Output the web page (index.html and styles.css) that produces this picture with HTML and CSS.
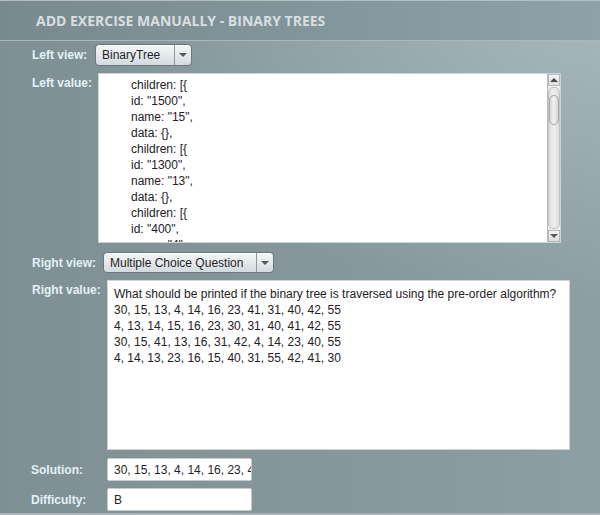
FILE: index.html
```html
<!DOCTYPE html>
<html>
<head>
<meta charset="utf-8">
<link rel="stylesheet" href="styles.css">
</head>
<body>
<div class="window">
  <div class="title">ADD EXERCISE MANUALLY - BINARY TREES</div>
  <div class="form">
    <div class="row row-view1">
      <div class="label lbl-view1">Left view:</div>
      <div class="combo combo-left">
        <span class="combo-text">BinaryTree</span>
        <span class="combo-arrow"><span class="tri"></span></span>
      </div>
    </div>
    <div class="row row-value1">
      <div class="label lbl-value1 lbl-top">Left value:</div>
      <div class="textbox textbox-left">
        <div class="code">
          <div>children: [{</div>
          <div>id: "1500",</div>
          <div>name: "15",</div>
          <div>data: {},</div>
          <div>children: [{</div>
          <div>id: "1300",</div>
          <div>name: "13",</div>
          <div>data: {},</div>
          <div>children: [{</div>
          <div>id: "400",</div>
          <div>name: "4",</div>
        </div>
        <div class="vscroll">
          <div class="sb-btn"><span class="tri-up"></span></div>
          <div class="sb-track">
            <div class="sb-thumb"></div>
          </div>
          <div class="sb-btn"><span class="tri"></span></div>
        </div>
      </div>
    </div>
    <div class="row row-view2">
      <div class="label lbl-view2">Right view:</div>
      <div class="combo combo-right">
        <span class="combo-text">Multiple Choice Question</span>
        <span class="combo-arrow"><span class="tri"></span></span>
      </div>
    </div>
    <div class="row row-value2">
      <div class="label lbl-value2 lbl-top">Right value:</div>
      <div class="textbox textbox-right">
        <div class="plain">
          <div>What should be printed if the binary tree is traversed using the pre-order algorithm?</div>
          <div>30, 15, 13, 4, 14, 16, 23, 41, 31, 40, 42, 55</div>
          <div>4, 13, 14, 15, 16, 23, 30, 31, 40, 41, 42, 55</div>
          <div>30, 15, 41, 13, 16, 31, 42, 4, 14, 23, 40, 55</div>
          <div>4, 14, 13, 23, 16, 15, 40, 31, 55, 42, 41, 30</div>
        </div>
      </div>
    </div>
    <div class="row row-sol">
      <div class="label lbl-sol">Solution:</div>
      <div class="input"><span class="input-text">30, 15, 13, 4, 14, 16, 23, 41, 31, 40, 42, 55</span></div>
    </div>
    <div class="row row-diff">
      <div class="label lbl-diff">Difficulty:</div>
      <div class="input"><span class="input-text">B</span></div>
    </div>
  </div>
</div>
</body>
</html>
```

FILE: styles.css
```css
* { box-sizing: border-box; }
html, body { margin: 0; padding: 0; }
body {
  width: 600px;
  height: 515px;
  overflow: hidden;
  font-family: "Liberation Sans", Arial, sans-serif;
}
.window {
  width: 600px;
  height: 515px;
  position: relative;
  border-top: 1px solid #b3bfc2;
  border-bottom: 2px solid #a7b4b8;
  background:
    radial-gradient(ellipse 520px 300px at 100% 0%, rgba(190, 206, 211, 0.55), rgba(190, 206, 211, 0) 100%),
    linear-gradient(to right, #7e9094 0%, #86989c 60%, #8d9fa3 100%);
}
.title {
  height: 40px;
  padding: 0 0 0 36px;
  display: flex;
  align-items: center;
  font-family: "Open Sans", sans-serif;
  font-weight: bold;
  font-size: 14px;
  color: #d7dfe0;
  letter-spacing: 0;
  border-bottom: 1px solid #a9b8bc;
  background: linear-gradient(to right, #798a8e 0%, #82959a 50%, #8ea1a6 100%);
}
.form {
  display: flex;
  flex-direction: column;
}
.row {
  display: flex;
  align-items: flex-start;
}
.label {
  padding-left: 32px;
  font-weight: bold;
  font-size: 12px;
  color: #e3f1f6;
}
.row-view1 { margin-top: 3px; height: 22px; align-items: center; }
.lbl-view1 { width: 95px; }
.row-value1 { margin-top: 7px; }
.lbl-value1 { width: 98px; }
.lbl-top { padding-top: 3px; }
.row-view2 { margin-top: 9px; height: 21px; align-items: center; }
.lbl-view2 { width: 103px; }
.row-value2 { margin-top: 7px; }
.lbl-value2 { width: 107px; }
.row-sol { margin-top: 8px; height: 23px; align-items: center; }
.lbl-sol { width: 107px; padding-left: 31px; }
.row-diff { margin-top: 7px; height: 23px; align-items: center; }
.lbl-diff { width: 107px; padding-left: 31px; }

.combo {
  height: 22px;
  display: flex;
  border: 1px solid #6b787c;
  border-radius: 4px;
  background: linear-gradient(#f4f6f7 0%, #e4e9eb 50%, #d3dadd 100%);
  box-shadow: inset 0 1px 0 #ffffff;
  font-size: 12px;
  color: #1f1f28;
}
.combo-left { width: 97px; }
.combo-right { width: 171px; height: 21px; }
.combo-text {
  flex: 1;
  display: flex;
  align-items: center;
  padding-left: 6px;
}
.combo-arrow {
  width: 17px;
  border-left: 1px solid #8d989b;
  display: flex;
  align-items: center;
  justify-content: center;
}
.tri {
  width: 0; height: 0;
  border-left: 4px solid transparent;
  border-right: 4px solid transparent;
  border-top: 4px solid #555b5e;
}
.tri-up {
  width: 0; height: 0;
  border-left: 4px solid transparent;
  border-right: 4px solid transparent;
  border-bottom: 4px solid #444a4d;
}

.textbox {
  background: #ffffff;
  border: 1px solid #cfd3d4;
  font-size: 12px;
  color: #24201f;
  display: flex;
}
.textbox-left {
  width: 463px;
  height: 170px;
  overflow: hidden;
}
.code {
  flex: 1;
  padding: 3px 0 0 32px;
  line-height: 16px;
  overflow: hidden;
}
.vscroll {
  width: 13px;
  display: flex;
  flex-direction: column;
  background: #f0f0f0;
  border-left: 1px solid #b7b9ba;
}
.sb-btn {
  height: 12px;
  display: flex;
  align-items: center;
  justify-content: center;
  background: linear-gradient(#f5f5f5, #dcdcdc);
  border: 1px solid #b8b8b8;
}
.sb-track {
  flex: 1;
  margin: 1px 0;
  border: 1px solid #c2c2c2;
  border-radius: 5px;
  background: linear-gradient(to right, #dedede, #efefef, #dcdcdc);
  padding-top: 7px;
}
.sb-thumb {
  height: 30px;
  border: 1px solid #a8a8a8;
  border-radius: 5px;
  background: linear-gradient(to right, #d6d6d6, #f2f2f2, #d0d0d0);
}
.textbox-right {
  width: 463px;
  height: 170px;
}
.plain {
  padding: 5px 0 0 6px;
  line-height: 16px;
}
.input {
  width: 145px;
  height: 23px;
  background: #ffffff;
  border: 1px solid #c9cdce;
  border-radius: 2px;
  font-size: 12px;
  color: #1f1f28;
  display: flex;
  align-items: center;
  padding-left: 6px;
  overflow: hidden;
  white-space: nowrap;
}
```
